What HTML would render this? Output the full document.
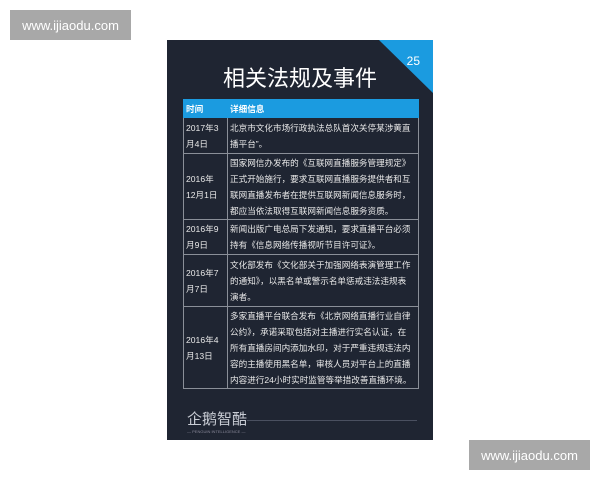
<!DOCTYPE html>
<html><head><meta charset="utf-8"><style>
body{margin:0;width:600px;height:480px;background:#fff;position:relative;overflow:hidden;font-family:"Liberation Sans","Noto Sans CJK SC",sans-serif}
.wm{position:absolute;background:#a8a8a8;color:#fff;font-size:13px;display:flex;align-items:center;justify-content:center}
.panel{position:absolute;left:167px;top:40px;width:266px;height:400px;background:#1f2532;overflow:hidden}
.tri{position:absolute;right:0;top:0;width:0;height:0;border-top:53px solid #1b9be0;border-left:54px solid transparent}
.num{position:absolute;right:13px;top:14px;color:#fff;font-size:12px}
.title{position:absolute;left:52px;width:162px;top:21px;text-align:center;color:#fff;font-size:22px;letter-spacing:0}
table{position:absolute;left:16px;top:59px;width:236px;border-collapse:collapse;font-size:8.6px;color:#e8e8e8;table-layout:fixed}
td,th{border:1px solid #8a8f98;padding:0 2px;line-height:16px;vertical-align:middle;text-align:left;white-space:nowrap;overflow:hidden}
th{background:#1b9be0;color:#fff;font-weight:bold;height:17px;border-color:#1b9be0}
.logo{position:absolute;left:20px;top:368px;color:#c8ccd4;font-size:15px}
.logo small{display:block;font-size:4px;color:#889}
.line{position:absolute;left:80px;top:380px;width:170px;height:1px;background:#4a5060}
</style></head><body>
<div class="wm" style="left:10px;top:10px;width:121px;height:30px">www.ijiaodu.com</div>
<div class="wm" style="left:469px;top:440px;width:121px;height:30px">www.ijiaodu.com</div>
<div class="panel">
<div class="tri"></div><div class="num">25</div>
<div class="title">相关法规及事件</div>
<table>
<colgroup><col style="width:44px"><col></colgroup>
<tr><th>时间</th><th>详细信息</th></tr>
<tr style="height:36px"><td>2017年3<br>月4日</td><td>北京市文化市场行政执法总队首次关停某涉黄直<br>播平台”。</td></tr>
<tr style="height:66px"><td>2016年<br>12月1日</td><td>国家网信办发布的《互联网直播服务管理规定》<br>正式开始施行，要求互联网直播服务提供者和互<br>联网直播发布者在提供互联网新闻信息服务时，<br>都应当依法取得互联网新闻信息服务资质。</td></tr>
<tr style="height:35px"><td>2016年9<br>月9日</td><td>新闻出版广电总局下发通知，要求直播平台必须<br>持有《信息网络传播视听节目许可证》。</td></tr>
<tr style="height:52px"><td>2016年7<br>月7日</td><td>文化部发布《文化部关于加强网络表演管理工作<br>的通知》，以黑名单或警示名单惩戒违法违规表<br>演者。</td></tr>
<tr style="height:82px"><td>2016年4<br>月13日</td><td>多家直播平台联合发布《北京网络直播行业自律<br>公约》，承诺采取包括对主播进行实名认证，在<br>所有直播房间内添加水印，对于严重违规违法内<br>容的主播使用黑名单，审核人员对平台上的直播<br>内容进行24小时实时监管等举措改善直播环境。</td></tr>
</table>
<div class="logo">企鹅智酷<small>— PENGUIN INTELLIGENCE —</small></div>
<div class="line"></div>
</div>
</body></html>
